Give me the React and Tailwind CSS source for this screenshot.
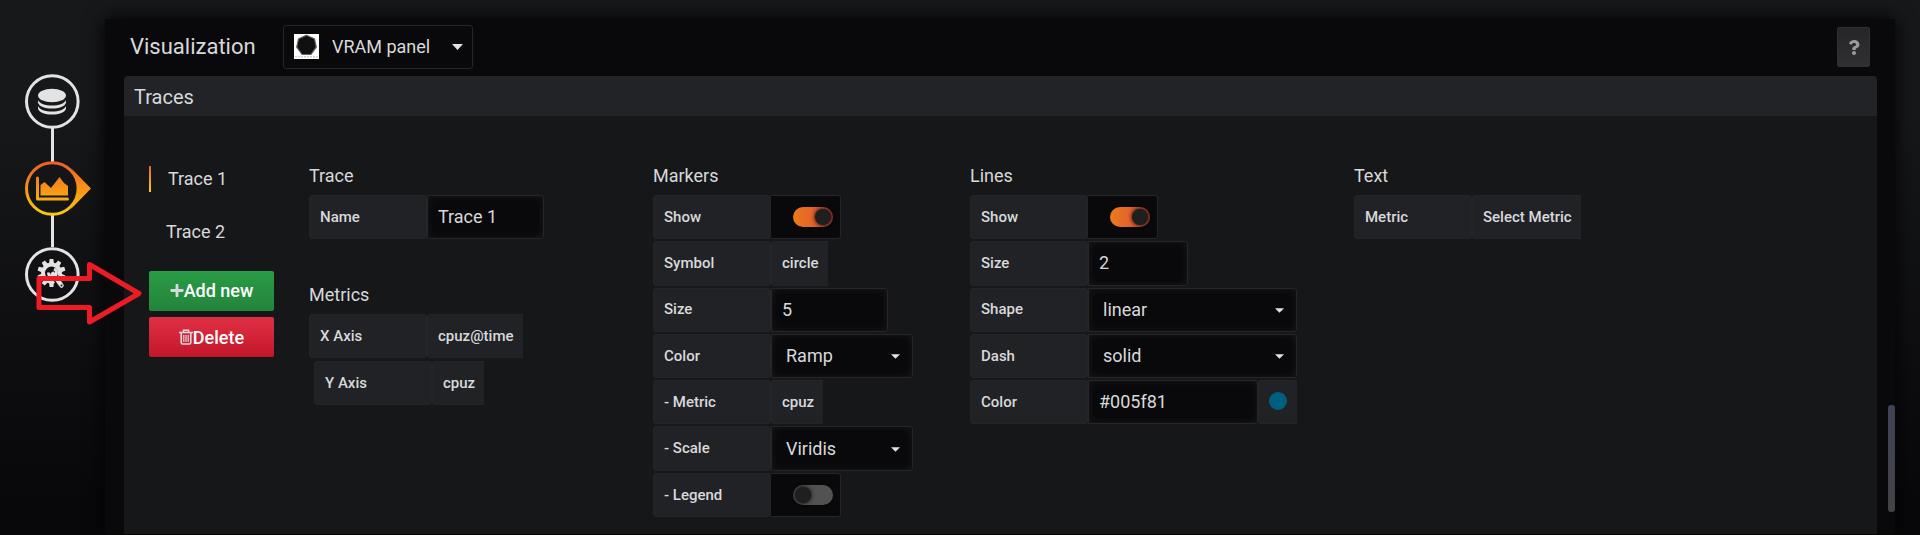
import { FaPlus, FaQuestion } from "react-icons/fa";

const inset = "bg-[#09090b] border border-[#262628] rounded-r-[3px] shadow-[inset_0_0_8px_rgba(255,255,255,0.07)]";
const key = "w-[118px] shrink-0 flex items-center bg-[#212226] border border-[#242528] rounded-[3px] px-[10px] text-[15px] font-medium";
const chip = "flex items-center bg-[#212226] border border-r-0 border-[#242528] rounded-l-[3px] pl-[10px] pr-[9px] text-[15px] font-medium";

function Row({ label, id, className = "", children }) {
  return (
    <div className={`flex ${className}`}>
      {id ? <label htmlFor={id} className={key}>{label}</label> : <span className={key}>{label}</span>}
      {children}
    </div>
  );
}

function TextField({ id, value, className }) {
  return <input id={id} type="text" defaultValue={value} className={`${inset} ${className} px-[10px] pb-px text-[18px] outline-none`} />;
}

function SelectField({ id, value, className }) {
  return (
    <div className={`grid items-stretch ${className}`}>
      <select id={id} className={`${inset} col-start-1 row-start-1 min-w-0 appearance-none pl-[14px] text-[18px] outline-none`}>
        <option>{value}</option>
      </select>
      <svg viewBox="0 0 10 5" className="pointer-events-none col-start-1 row-start-1 mr-[13px] mt-px h-[5px] w-[9px] place-self-center justify-self-end fill-[#e3e3e3]">
        <path d="M0 0h10L5 5z" />
      </svg>
    </div>
  );
}

function Toggle({ id, on }) {
  return (
    <div className="flex w-[70px] items-center justify-end rounded-r-[3px] border border-l-0 border-[#262628] bg-[#09090b] pr-[7px]">
      <label className={`flex h-[20px] w-[40px] items-center rounded-full px-[2px] ${on ? "justify-end bg-linear-to-r from-[#eb7b18] via-[#e3622c] to-[#a83b2f]" : "justify-start bg-[#525252]"}`}>
        <input id={id} type="checkbox" defaultChecked={on} className="sr-only" />
        <span className="h-[16px] w-[16px] rounded-full bg-[#1f1f20] shadow-[0_0_4px_#000]" />
      </label>
    </div>
  );
}

function Group({ title, className, children }) {
  return (
    <section className={`shrink-0 ${className}`}>
      <h6 className="mb-[8px] text-[18px] leading-[22px]">{title}</h6>
      {children}
    </section>
  );
}

const rows = "grid h-[322px] grid-rows-7 gap-[2px]";

const teeth = [0, 36, 72, 108, 144, 180, 216, 252, 288, 324];

function Steps() {
  return (
    <nav className="w-[105px] shrink-0" aria-label="Editor sections">
      <svg viewBox="0 0 150 340" className="relative z-10 h-[340px] w-[150px]">
        <defs>
          <linearGradient id="flame" gradientUnits="userSpaceOnUse" x1="0" y1="161" x2="0" y2="215">
            <stop offset="0" stopColor="#f05a28" />
            <stop offset="1" stopColor="#fbca0a" />
          </linearGradient>
        </defs>
        <g fill="none" stroke="#e3e3e3" strokeWidth="3">
          <path d="M52.500 128v34M52.500 215v32" />
          <circle cx="52.300" cy="101.500" r="25.800" />
          <circle cx="52.300" cy="274.500" r="25.800" />
        </g>
        <g fill="#e3e3e3">
          <ellipse cx="52" cy="95.500" rx="14" ry="6.700" />
          <path d="M38 100c2 4 7 5.500 14 5.500s12-1.500 14-5.500v2.500c-1 4-7 6-14 6s-13-2-14-6z" />
          <path d="M38 106c2 4 7 5.500 14 5.500s12-1.500 14-5.500v2.500c-1 4-7 6-14 6s-13-2-14-6z" />
        </g>
        <path d="M71 168L91 188.500L71 209C79.500 198 79.500 179 71 168z" fill="url(#flame)" />
        <circle cx="52.300" cy="188.500" r="25.800" fill="none" stroke="url(#flame)" strokeWidth="3" />
        <path d="M37.500 178V199H67.500" fill="none" stroke="url(#flame)" strokeWidth="3" strokeLinecap="round" strokeLinejoin="round" />
        <path d="M40.500 195.500v-10.500l4-3 6.500 6L59.500 177l4.500 6 4 3v9.500z" fill="url(#flame)" />
        <g>
          <circle cx="51.500" cy="273" r="8.500" fill="none" stroke="#e3e3e3" strokeWidth="4" />
          {teeth.map((angle) => (
            <path key={angle} d="M49 264l.6-5h3.800l.6 5z" fill="#e3e3e3" transform={`rotate(${angle} 51.500 273)`} />
          ))}
          <path d="M55 277l7 9" stroke="#141517" strokeWidth="7" />
          <path d="M53 274l8.500 11.500" stroke="#e3e3e3" strokeWidth="4.500" strokeLinecap="round" />
          <path d="M54 269a4 4 0 1 1-5.500 3.500" fill="none" stroke="#e3e3e3" strokeWidth="2.800" />
          <circle cx="61.500" cy="285.500" r="1" fill="#141517" />
        </g>
        <path d="M39 278.500H89.500V264.500L139 293.500L89.500 322V307.500H39z" fill="none" stroke="#ed1c24" strokeWidth="5" strokeLinejoin="round" />
      </svg>
    </nav>
  );
}

export default function App() {
  return (
    <div className="flex min-h-screen overflow-hidden bg-linear-to-b from-[#17181a] from-20% to-[#08080a] to-95% font-[Roboto,sans-serif] text-[#d8d9da]">
      <Steps />
      <main className="mt-[19px] mr-[25px] mb-px flex min-w-0 grow rounded-t-[3px] bg-[#09090b] pl-[19px] shadow-[0_0_20px_#000]">
        <div className="flex min-w-0 grow flex-col">
          <header className="flex h-[57px] items-center pr-[7px]">
            <h1 className="w-[159px] shrink-0 pb-[2px] pl-[6px] text-[22px]">Visualization</h1>
            <button type="button" className="mb-[1px] flex h-[44px] w-[190px] items-center rounded-[3px] border border-[#262628] px-[10px] pb-px text-[18px]">
              <svg viewBox="0 0 25 25" className="mr-[13px] h-[25px] w-[25px]">
                <path fill="#fff" d="M0 0h25v25H0z" />
                <path fill="#0f1110" stroke="#666" strokeWidth="1.200" d="M12.500 1.200L20.500 4.800L22.300 13L17 20.500H8L2.700 13L4.500 4.800z" />
                <path d="M1 22.800h23" stroke="#bbb" strokeDasharray="2 1" />
              </svg>
              VRAM panel
              <svg viewBox="0 0 11 6" className="-mr-px ml-auto h-[6px] w-[11px] fill-[#e3e3e3]"><path d="M0 0h11L5.500 6z" /></svg>
            </button>
            <button type="button" aria-label="Help" className="mb-px ml-auto flex h-[40px] w-[33px] items-center justify-center rounded-[2px] border border-[#303032] bg-linear-to-b from-[#262628] to-[#303032] text-[#9a9a9a]">
              <FaQuestion className="h-[15px] w-[14px]" />
            </button>
          </header>
          <section className="flex grow flex-col rounded-t-[4px] bg-[#161719]">
            <h2 className="h-[40px] rounded-t-[4px] bg-[#222326] pl-[10px] text-[20px] leading-[42px]">Traces</h2>
            <div className="flex pt-[49px] pl-[25px]">
              <aside className="flex w-[125px] shrink-0 flex-col text-[18px]">
                <a href="#trace-1" className="mt-px flex h-[26px] gap-[17px] leading-[25px]">
                  <span className="h-[26px] w-[2px] bg-linear-to-b from-[#f05a28] to-[#fbca0a]" />
                  Trace 1
                </a>
                <a href="#trace-2" className="mt-[27px] h-[26px] pl-[17px] leading-[25px]">Trace 2</a>
                <button type="button" className="mt-[26px] flex h-[40px] items-center justify-center rounded-[2px] bg-linear-to-b from-[#299c46] to-[#23843b] pb-px font-medium text-white">
                  <FaPlus className="h-[15px] w-[14px] text-[#d8d9da]" />Add new
                </button>
                <button type="button" className="mt-[6px] flex h-[40px] items-center justify-center rounded-[2px] bg-linear-to-b from-[#e02f44] to-[#c4162a] font-medium text-white">
                  <svg viewBox="0 0 14 16" className="h-[16px] w-[14px]" fill="none" stroke="#d8d9da">
                    <path strokeWidth="1.600" d="M0 3.500h14M4.500 3V1.200h5V3M2.200 4v9.500q0 1.500 1.500 1.500h6.600q1.500 0 1.500-1.500V4" />
                    <path strokeWidth="1.200" d="M4.800 6v7M7 6v7M9.200 6v7" />
                  </svg>
                  Delete
                </button>
              </aside>
              <div className="ml-[35px] w-[344px] shrink-0">
                <Group title="Trace">
                  <Row label="Name" id="name" className="h-[44px]"><TextField id="name" value="Trace 1" className="w-[117px]" /></Row>
                </Group>
                <Group title="Metrics" className="mt-[45px]">
                  <Row label="X Axis" className="h-[44px]"><button type="button" className={chip}>cpuz@time</button></Row>
                  <Row label="Y Axis" className="mt-[3px] ml-[5px] h-[44px]"><button type="button" className={chip}>cpuz</button></Row>
                </Group>
              </div>
              <Group title="Markers" className="w-[317px]">
                <div className={rows}>
                  <Row label="Show" id="markers"><Toggle id="markers" on /></Row>
                  <Row label="Symbol"><button type="button" className={chip}>circle</button></Row>
                  <Row label="Size" id="msize"><TextField id="msize" value="5" className="w-[117px]" /></Row>
                  <Row label="Color" id="mcolor"><SelectField id="mcolor" value="Ramp" className="w-[142px]" /></Row>
                  <Row label="- Metric"><button type="button" className={chip}>cpuz</button></Row>
                  <Row label="- Scale" id="mscale"><SelectField id="mscale" value="Viridis" className="w-[142px]" /></Row>
                  <Row label="- Legend" id="legend"><Toggle id="legend" /></Row>
                </div>
              </Group>
              <Group title="Lines" className="w-[384px]">
                <div className={rows}>
                  <Row label="Show" id="lines"><Toggle id="lines" on /></Row>
                  <Row label="Size" id="lsize"><TextField id="lsize" value="2" className="w-[100px]" /></Row>
                  <Row label="Shape" id="shape"><SelectField id="shape" value="linear" className="w-[209px]" /></Row>
                  <Row label="Dash" id="dash"><SelectField id="dash" value="solid" className="w-[209px]" /></Row>
                  <Row label="Color" id="lcolor">
                    <TextField id="lcolor" value="#005f81" className="w-[170px]" />
                    <button type="button" aria-label="Pick color" className="flex w-[39px] items-center justify-center rounded-l-[3px] border border-r-0 border-[#242528] bg-[#212226]">
                      <span className="mb-[3px] h-[18px] w-[18px] rounded-full bg-[#005f81]" />
                    </button>
                  </Row>
                </div>
              </Group>
              <Group title="Text">
                <Row label="Metric" className="h-[44px]"><button type="button" className={chip}>Select Metric</button></Row>
              </Group>
            </div>
          </section>
        </div>
        <div className="w-[18px] shrink-0">
          <div className="mt-[386px] ml-auto h-[107px] w-[7px] rounded-[3px] bg-linear-to-b from-[#404357] to-[#434345]" />
        </div>
      </main>
    </div>
  );
}
